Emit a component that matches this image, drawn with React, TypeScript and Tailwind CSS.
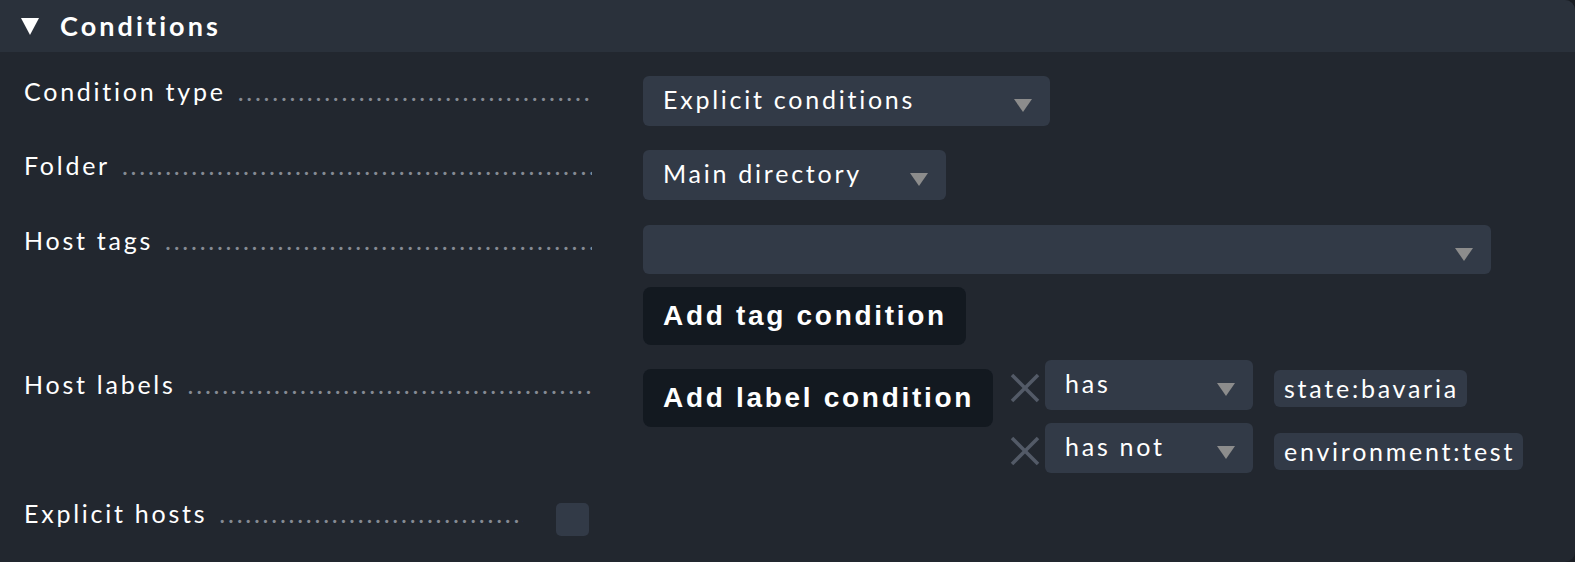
import React from "react";

const DOTS = ".".repeat(200);

function Arrow({ className = "" }: { className?: string }) {
  return (
    <svg width="18" height="13" viewBox="0 0 18 13" className={className}>
      <polygon points="0,0 18,0 9,13" fill="#8c8c8c" />
    </svg>
  );
}

function Label({ text, width = 592 }: { text: string; width?: number }) {
  return (
    <div
      className="flex items-baseline pl-[24px] text-[25px] leading-[30px] text-white shrink-0"
      style={{ width }}
    >
      <span className="whitespace-nowrap tracking-[2.75px]">{text}</span>
      <span className="ml-[12px] flex-1 overflow-hidden whitespace-nowrap text-[#868b94] tracking-[2.75px]">
        {DOTS}
      </span>
    </div>
  );
}

function Select({ text, w, h = 50 }: { text: string; w: number; h?: number }) {
  return (
    <div
      className="flex items-center justify-between rounded-[6px] bg-[#323a47] pl-[20px] pr-[18px] text-[25px] leading-[30px] text-white"
      style={{ width: w, height: h }}
    >
      <span className="whitespace-nowrap tracking-[2.75px] pb-[4px]">{text}</span>
      <Arrow className="mt-[9px] shrink-0" />
    </div>
  );
}

function XIcon() {
  return (
    <svg width="30" height="30" viewBox="0 0 30 30" className="shrink-0 mt-[13px]">
      <line x1="2" y1="2" x2="28" y2="28" stroke="#535a67" strokeWidth="3.5" />
      <line x1="28" y1="2" x2="2" y2="28" stroke="#535a67" strokeWidth="3.5" />
    </svg>
  );
}

function Chip({ text }: { text: string }) {
  return (
    <div className="ml-[21px] mt-[10px] h-[37px] flex items-center rounded-[6px] bg-[#323a47] pl-[10px] pr-[8px] text-[25px] leading-[30px] text-white tracking-[2.75px] whitespace-nowrap">
      <span className="pb-[2px]">{text}</span>
    </div>
  );
}

function Button({ text, w }: { text: string; w: number }) {
  return (
    <div
      className="flex h-[58px] items-center rounded-[8px] bg-[#131920] pl-[20px] text-[28px] font-bold tracking-[2.7px] text-white"
      style={{ width: w, fontFamily: '"Liberation Sans", Arial, sans-serif' }}
    >
      <span className="whitespace-nowrap">{text}</span>
    </div>
  );
}

export default function App() {
  return (
    <div
      className="w-[1575px] h-[562px] bg-[#1a1e24]"
      style={{ fontFamily: 'Lato, "Noto Sans", sans-serif' }}
    >
      <div className="h-full overflow-hidden rounded-r-[10px] bg-[#22272f]">
        <div className="flex h-[52px] items-center bg-[#2a313b] pl-[21px]">
          <svg width="18" height="17" viewBox="0 0 18 17" className="mt-[1px]">
            <polygon points="0,0 18,0 9,17" fill="#ffffff" />
          </svg>
          <span className="ml-[21px] text-[27px] font-bold tracking-[3.1px] text-white">
            Conditions
          </span>
        </div>

        {/* Row 1 */}
        <div className="mt-[24px] flex items-start">
          <Label text="Condition type" />
          <div className="ml-[51px]">
            <Select text="Explicit conditions" w={407} />
          </div>
        </div>

        {/* Row 2 */}
        <div className="mt-[24px] flex items-start">
          <Label text="Folder" />
          <div className="ml-[51px]">
            <Select text="Main directory" w={303} />
          </div>
        </div>

        {/* Row 3 */}
        <div className="mt-[25px] flex items-start">
          <Label text="Host tags" />
          <div className="ml-[51px] flex flex-col">
            <Select text="" w={848} h={49} />
            <div className="mt-[13px]">
              <Button text="Add tag condition" w={323} />
            </div>
          </div>
        </div>

        {/* Row 4 */}
        <div className="mt-[15px] flex items-start">
          <div className="mt-[9px]">
            <Label text="Host labels" />
          </div>
          <div className="ml-[51px] flex items-start">
            <div className="mt-[9px]">
              <Button text="Add label condition" w={350} />
            </div>
            <div className="ml-[17px] flex flex-col gap-[13px]">
              <div className="flex items-start">
                <XIcon />
                <div className="ml-[5px]">
                  <Select text="has" w={208} />
                </div>
                <Chip text="state:bavaria" />
              </div>
              <div className="flex items-start">
                <XIcon />
                <div className="ml-[5px]">
                  <Select text="has not" w={208} />
                </div>
                <Chip text="environment:test" />
              </div>
            </div>
          </div>
        </div>

        {/* Row 5 */}
        <div className="mt-[25px] flex items-start">
          <Label text="Explicit hosts" width={523} />
          <div className="ml-[33px] mt-[5px] h-[33px] w-[33px] rounded-[5px] bg-[#323a47]" />
        </div>
      </div>
    </div>
  );
}
